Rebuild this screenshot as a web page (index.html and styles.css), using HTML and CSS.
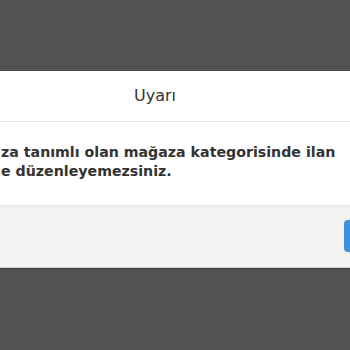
FILE: index.html
```html
<!DOCTYPE html>
<html lang="tr">
<head>
<meta charset="utf-8">
<link rel="stylesheet" href="styles.css">
</head>
<body>
<div class="modal">
  <div class="modal-header">Uyarı</div>
  <div class="modal-body">za tanımlı olan mağaza kategorisinde ilan<br>e düzenleyemezsiniz.</div>
  <div class="modal-footer"><button class="btn">Tamam</button></div>
</div>
</body>
</html>
```
FILE: styles.css
```css
html, body {
  margin: 0;
  height: 100%;
  background: #525252;
  overflow: hidden;
  font-family: "DejaVu Sans", sans-serif;
}
.modal {
  position: absolute;
  top: 71px;
  left: -220px;
  width: 750px;
  background: #fff;
  color: #333;
  box-shadow: 0 1px 2px rgba(0,0,0,0.3);
}
.modal-header {
  height: 50px;
  line-height: 50px;
  text-align: center;
  font-size: 16px;
  border-bottom: 1px solid #e6e6e6;
}
.modal-body {
  padding: 21px 0 24px 221px;
  font-size: 14.2px;
  line-height: 19px;
  font-weight: bold;
  height: 38px;
}
.modal-footer {
  background: #f2f2f2;
  border-top: 1px solid #e6e6e6;
  height: 61px;
  display: flex;
  align-items: center;
  justify-content: flex-end;
  padding-right: 106px;
  border-bottom: 1px solid #cfcfcf;
}
.btn {
  width: 80px;
  height: 32px;
  margin-top: -2px;
  border: none;
  border-radius: 4px;
  background: #3d8fe0;
  color: #fff;
  font-family: inherit;
  font-size: 14px;
}
```
